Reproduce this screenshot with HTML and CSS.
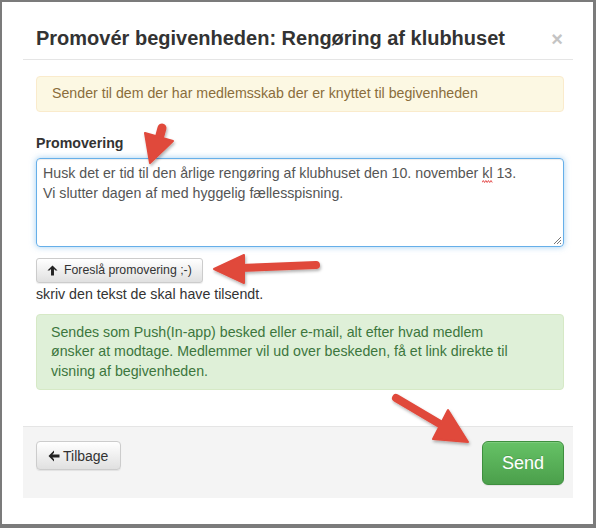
FILE: index.html
```html
<!DOCTYPE html>
<html lang="da">
<head>
<meta charset="utf-8">
<title>Promovér begivenheden</title>
<link rel="stylesheet" href="styles.css">
</head>
<body>
<div class="frame">
  <div class="modal">
    <div class="modal-header">
      <h4 class="modal-title">Promovér begivenheden: Rengøring af klubhuset</h4>
      <span class="close">×</span>
    </div>
    <div class="modal-body">
      <div class="alert alert-warning">Sender til dem der har medlemsskab der er knyttet til begivenheden</div>
      <label class="field-label">Promovering</label>
      <div class="textarea">Husk det er tid til den årlige rengøring af klubhuset den 10. november <span class="spell">kl<svg class="wave" width="12" height="3" viewBox="0 0 12 3" preserveAspectRatio="none"><path d="M0 2.5 L1.5 0.5 L3 2.5 L4.5 0.5 L6 2.5 L7.5 0.5 L9 2.5 L10.5 0.5 L12 2.5" fill="none" stroke="#e03030" stroke-width="0.9"/></svg></span> 13.<br>Vi slutter dagen af med hyggelig fællesspisning.<svg class="grip" width="9" height="9" viewBox="0 0 9 9"><path d="M8 1 L1 8 M8 4 L4 8 M8 7 L7 8" stroke="#777" stroke-width="1"/></svg></div>
      <button class="btn btn-sm"><svg class="icon" width="11" height="11" viewBox="0 0 12 12"><path d="M6 0.5 L11.5 6 L9.3 6 L7.6 4.4 L7.6 11.5 L4.4 11.5 L4.4 4.4 L2.7 6 L0.5 6 Z" fill="#222"/></svg>Foreslå promovering ;-)</button>
      <p class="help">skriv den tekst de skal have tilsendt.</p>
      <div class="alert alert-success">Sendes som Push(In-app) besked eller e-mail, alt efter hvad medlem ønsker at modtage. Medlemmer vil ud over beskeden, få et link direkte til visning af begivenheden.</div>
    </div>
    <div class="modal-footer">
      <button class="btn btn-back"><svg class="icon" width="12" height="12" viewBox="0 0 12 12"><path d="M0.5 6 L6 0.5 L6 2.7 L4.4 4.4 L11.5 4.4 L11.5 7.6 L4.4 7.6 L6 9.3 L6 11.5 Z" fill="#222"/></svg>Tilbage</button>
      <button class="btn btn-success">Send</button>
    </div>
  </div>
</div>
<svg class="annotations" width="596" height="528" viewBox="0 0 596 528">
  <defs>
    <filter id="sh" x="-20%" y="-20%" width="140%" height="140%">
      <feDropShadow dx="1" dy="2" stdDeviation="1.5" flood-color="#000" flood-opacity="0.3"/>
    </filter>
  </defs>
  <g fill="#e0483b" stroke="#e0483b" filter="url(#sh)">
    <line x1="162" y1="128" x2="159" y2="139" stroke-width="9" stroke-linecap="round"/>
    <polygon points="145,133 173,141 150,163" stroke-width="2" stroke-linejoin="round"/>
    <line x1="240" y1="268" x2="316" y2="265" stroke-width="8" stroke-linecap="round"/>
    <polygon points="214,269 244,255 244,283" stroke-width="2" stroke-linejoin="round"/>
    <line x1="396" y1="398" x2="440" y2="424" stroke-width="8" stroke-linecap="round"/>
    <polygon points="448,410 433,439 468,442" stroke-width="2" stroke-linejoin="round"/>
  </g>
</svg>
</body>
</html>
```
FILE: styles.css
```css
html, body {
  margin: 0;
  padding: 0;
  background: #fff;
}
body {
  position: relative;
  width: 596px;
  height: 528px;
  font-family: "Liberation Sans", Arial, Helvetica, sans-serif;
  color: #333;
  overflow: hidden;
}
.frame {
  box-sizing: border-box;
  width: 596px;
  height: 528px;
  border-style: solid;
  border-color: #7b7b7b;
  border-width: 2px 3px 4px 2px;
  padding: 10px 0 0 21px;
  background: #fff;
}
.modal {
  width: 550px;
  background: #fff;
}
.modal-header {
  display: flex;
  align-items: center;
  justify-content: space-between;
  padding: 15px 10px 10px 13px;
  border-bottom: 1px solid #e5e5e5;
}
.modal-title {
  margin: 0;
  font-size: 20px;
  line-height: 22px;
  font-weight: bold;
  color: #333;
}
.close {
  font-size: 20px;
  font-weight: bold;
  line-height: 20px;
  color: #c4c4c4;
  margin-top: 2px;
}
.modal-body {
  padding: 16px 9px 36px 13px;
}
.alert {
  border: 1px solid transparent;
  border-radius: 4px;
  font-size: 14.2px;
  line-height: 19.5px;
}
.alert-warning {
  background: #fcf8e3;
  border-color: #faebcc;
  color: #8a6d3b;
  padding: 7px 35px 7px 15px;
  margin-bottom: 22px;
}
.alert-success {
  background: #dff0d8;
  border-color: #d6e9c6;
  color: #3c763d;
  padding: 8px 40px 8px 14px;
  margin-top: 10px;
}
.field-label {
  display: block;
  font-size: 14.2px;
  line-height: 19px;
  font-weight: bold;
  margin-bottom: 5px;
}
.textarea {
  position: relative;
  box-sizing: border-box;
  height: 89px;
  border: 1px solid #66afe9;
  border-radius: 4px;
  box-shadow: inset 0 1px 1px rgba(0,0,0,.075), 0 0 6px rgba(102,175,233,.6);
  padding: 4px 6px;
  font-size: 14.2px;
  line-height: 20px;
  color: #555;
}
.spell {
  position: relative;
}
.wave {
  position: absolute;
  left: 0;
  bottom: -2px;
  width: 100%;
}
.grip {
  position: absolute;
  right: 1px;
  bottom: 1px;
}
.btn {
  display: inline-flex;
  align-items: center;
  box-sizing: border-box;
  font-family: inherit;
  color: #333;
  border: 1px solid #ccc;
  border-radius: 4px;
  background: linear-gradient(to bottom, #fff 0%, #e0e0e0 100%);
  box-shadow: inset 0 1px 0 rgba(255,255,255,.15), 0 1px 1px rgba(0,0,0,.075);
  cursor: pointer;
}
.btn-sm {
  margin-top: 11px;
  height: 25px;
  padding: 0 10px 0 10px;
  font-size: 12.3px;
  border-radius: 3px;
}
.icon {
  margin-right: 6px;
}
.help {
  margin: 2px 0 0;
  font-size: 14.2px;
  line-height: 19px;
  color: #333;
}
.modal-footer {
  display: flex;
  justify-content: space-between;
  align-items: flex-start;
  background: #f4f4f4;
  border-top: 1px solid #e5e5e5;
  padding: 14px 9px 13px 13px;
}
.btn-back {
  height: 29px;
  padding: 0 12px 0 11px;
  font-size: 14px;
}
.btn-back .icon {
  margin-right: 3px;
}
.btn-success {
  height: 44px;
  padding: 0 19px;
  font-size: 18px;
  color: #fff;
  border-color: #3e8f3e;
  border-radius: 6px;
  background: linear-gradient(to bottom, #66c266 0%, #4b9f4b 100%);
  text-shadow: 0 -1px 0 rgba(0,0,0,.15);
}
.annotations {
  position: absolute;
  left: 0;
  top: 0;
  pointer-events: none;
}
```
